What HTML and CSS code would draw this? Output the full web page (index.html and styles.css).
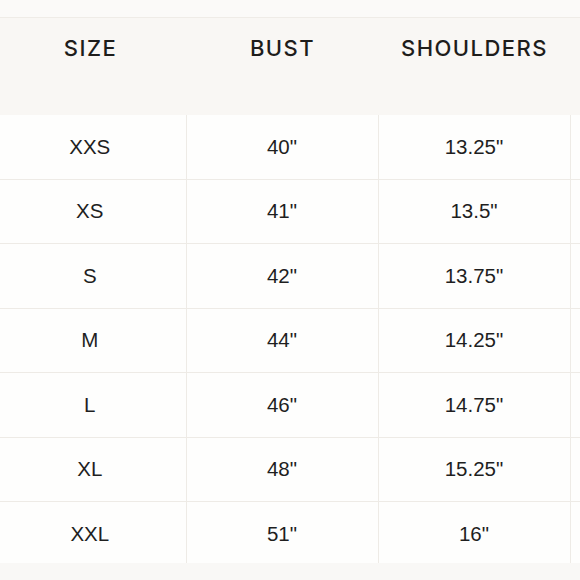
FILE: index.html
```html
<!DOCTYPE html>
<html lang="en">
<head>
<meta charset="utf-8">
<title>Size chart</title>
<link rel="stylesheet" href="styles.css">
</head>
<body>
<div class="top"></div>
<div class="wrap">
  <table class="chart">
    <thead>
      <tr>
        <th>SIZE</th>
        <th>BUST</th>
        <th>SHOULDERS</th>
        <th></th>
      </tr>
    </thead>
    <tbody>
      <tr><td>XXS</td><td>40"</td><td>13.25"</td><td></td></tr>
      <tr><td>XS</td><td>41"</td><td>13.5"</td><td></td></tr>
      <tr><td>S</td><td>42"</td><td>13.75"</td><td></td></tr>
      <tr><td>M</td><td>44"</td><td>14.25"</td><td></td></tr>
      <tr><td>L</td><td>46"</td><td>14.75"</td><td></td></tr>
      <tr><td>XL</td><td>48"</td><td>15.25"</td><td></td></tr>
      <tr><td>XXL</td><td>51"</td><td>16"</td><td></td></tr>
    </tbody>
  </table>
</div>
</body>
</html>
```
FILE: styles.css
```css
html, body {
  margin: 0;
  padding: 0;
}
body {
  width: 580px;
  height: 580px;
  overflow: hidden;
  background: #f9f8f6;
}
.top {
  height: 17px;
  background: #fbfaf8;
  border-bottom: 1px solid #efece7;
}
.wrap {
  height: 545px;
  overflow: hidden;
}
.chart {
  border-collapse: collapse;
  table-layout: fixed;
  width: 768px;
  margin-left: -6px;
}
.chart th {
  width: 192px;
  height: 97px;
  padding: 0;
  vertical-align: top;
  background: #f9f7f4;
  font-family: Inter, "Noto Sans", sans-serif;
  font-weight: 500;
  font-size: 22px;
  letter-spacing: 1.45px;
  line-height: 26px;
  color: #1e1d1b;
  text-align: center;
  box-sizing: border-box;
  padding-top: 17px;
  padding-left: 1px;
}
.chart td {
  height: 63.5px;
  padding: 0;
  background: #fefefd;
  border-bottom: 1px solid #eeebe6;
  border-left: 1px solid #eeebe6;
  font-family: "Liberation Sans", Arial, sans-serif;
  font-size: 20.5px;
  color: #1f1f1f;
  text-align: center;
  vertical-align: middle;
}
.chart td:first-child {
  border-left: none;
}
```
